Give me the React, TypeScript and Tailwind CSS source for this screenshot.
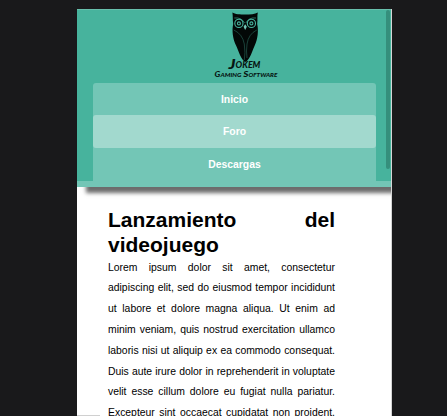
function OwlLogo() {
  return (
    <svg className="h-[68px] w-[66px]" viewBox="0 0 66 68" role="img" aria-label="Jokem Gaming Software">
      <path d="M18.4 0.4 C21 2.2 26 2.4 31.2 2.4 C36 2.4 41 2.2 43.8 0.4 C43 4 43.8 7 43.2 12 C44.6 18 44 27 40.5 34 C37.8 39.5 36.5 47 31.3 50 C26.5 47 25 39.5 22.3 34 C18.6 27 17.8 18 19.2 12 C18.6 7 19 4 18.4 0.4Z" fill="#030807" />
      <g fill="none" stroke="#47b39d">
        <circle cx="24.9" cy="11.4" r="4.1" strokeWidth="1.1" />
        <circle cx="37.4" cy="11.4" r="4.1" strokeWidth="1.1" />
        <circle cx="24.9" cy="11.4" r="1.5" strokeWidth="1.1" />
        <circle cx="37.4" cy="11.4" r="1.5" strokeWidth="1.1" />
        <path d="M20.3 6 Q27.5 5.1 30.6 11 M42 6 Q34.8 5.1 31.8 11" strokeWidth="0.6" />
        <path d="M19.8 18 Q28.5 22 30.3 32 Q31.6 41 30.3 48 M42.8 18 Q34.5 22 33 32 Q32 39 33 46" strokeWidth="0.45" opacity="0.75" />
      </g>
      <path d="M31.2 12.3 L32.8 14.8 L31.2 18 L29.6 14.8Z" fill="#73c6b6" />
      <g fill="#061512" fontFamily="Lato, sans-serif" fontWeight="900" fontStyle="italic">
        <text y="57" x="14.5" fontSize="13" textLength="7" lengthAdjust="spacingAndGlyphs">J</text>
        <text y="56" x="21.6" fontSize="8.6" textLength="24.8" lengthAdjust="spacingAndGlyphs">OKEM</text>
        <text y="65" x="0.5" fontSize="8" textLength="5.8" lengthAdjust="spacingAndGlyphs">G</text>
        <text y="65" x="6.4" fontSize="6" textLength="21" lengthAdjust="spacingAndGlyphs">AMING</text>
        <text y="65" x="29.2" fontSize="8" textLength="5.2" lengthAdjust="spacingAndGlyphs">S</text>
        <text y="65" x="34.5" fontSize="6" textLength="28.8" lengthAdjust="spacingAndGlyphs">OFTWARE</text>
      </g>
    </svg>
  );
}

const links = ["Inicio", "Foro", "Descargas"];

export default function App() {
  return (
    <div className="flex h-[416px] w-[447px] overflow-hidden bg-[#19191b] pt-[9px] pl-[77px] font-['Liberation_Sans',Arial,sans-serif]">
      <div className="h-[407px] w-[315px] overflow-hidden border-r border-[#d5d5d5] bg-white">
        <header className="relative -mr-px h-[178px] w-[315px] bg-[#73c6b6] shadow-[9px_6px_4px_0px_#6c6c6c]">
          <div className="flex h-[172px] flex-col items-center border-t border-[#68bfac] bg-[#47b39d] pt-[2px]">
            <div className="mr-[-24px] h-[71px] shrink-0">
              <OwlLogo />
            </div>
            <nav className="h-[98px] w-[283px] shrink-0 overflow-hidden rounded-t-[3px] bg-[#73c6b6]">
              {links.map((link) => (
                <a
                  key={link}
                  className={
                    link === "Foro"
                      ? "flex h-[33px] items-center justify-center rounded-[3px] bg-[#a2d9ce] text-[10.4px] font-bold text-white"
                      : "flex h-[32px] items-center justify-center pt-px text-[10.4px] font-bold text-white"
                  }
                >
                  {link}
                </a>
              ))}
            </nav>
          </div>
          <div className="absolute top-[1px] right-[2px] h-[159px] w-[4px] rounded-full bg-[#358f7c]" />
        </header>
        <main className="w-[258px] pt-[21px] pl-[31px] text-justify text-black">
          <h1 className="text-[21px] leading-[24.8px] font-bold">Lanzamiento del videojuego</h1>
          <p className="text-[10.4px] leading-[20.8px] [text-align-last:justify]">
            Lorem ipsum dolor sit amet, consectetur adipiscing elit, sed do eiusmod tempor incididunt ut labore et
            dolore magna aliqua. Ut enim ad minim veniam, quis nostrud exercitation ullamco laboris nisi ut aliquip ex
            ea commodo consequat. Duis aute irure dolor in reprehenderit in voluptate velit esse cillum dolore eu
            fugiat nulla pariatur. Excepteur sint occaecat cupidatat non proident,
          </p>
        </main>
        <div className="relative -mt-[9px] h-px w-[23px] bg-[#d0d0d0]" />
      </div>
    </div>
  );
}
